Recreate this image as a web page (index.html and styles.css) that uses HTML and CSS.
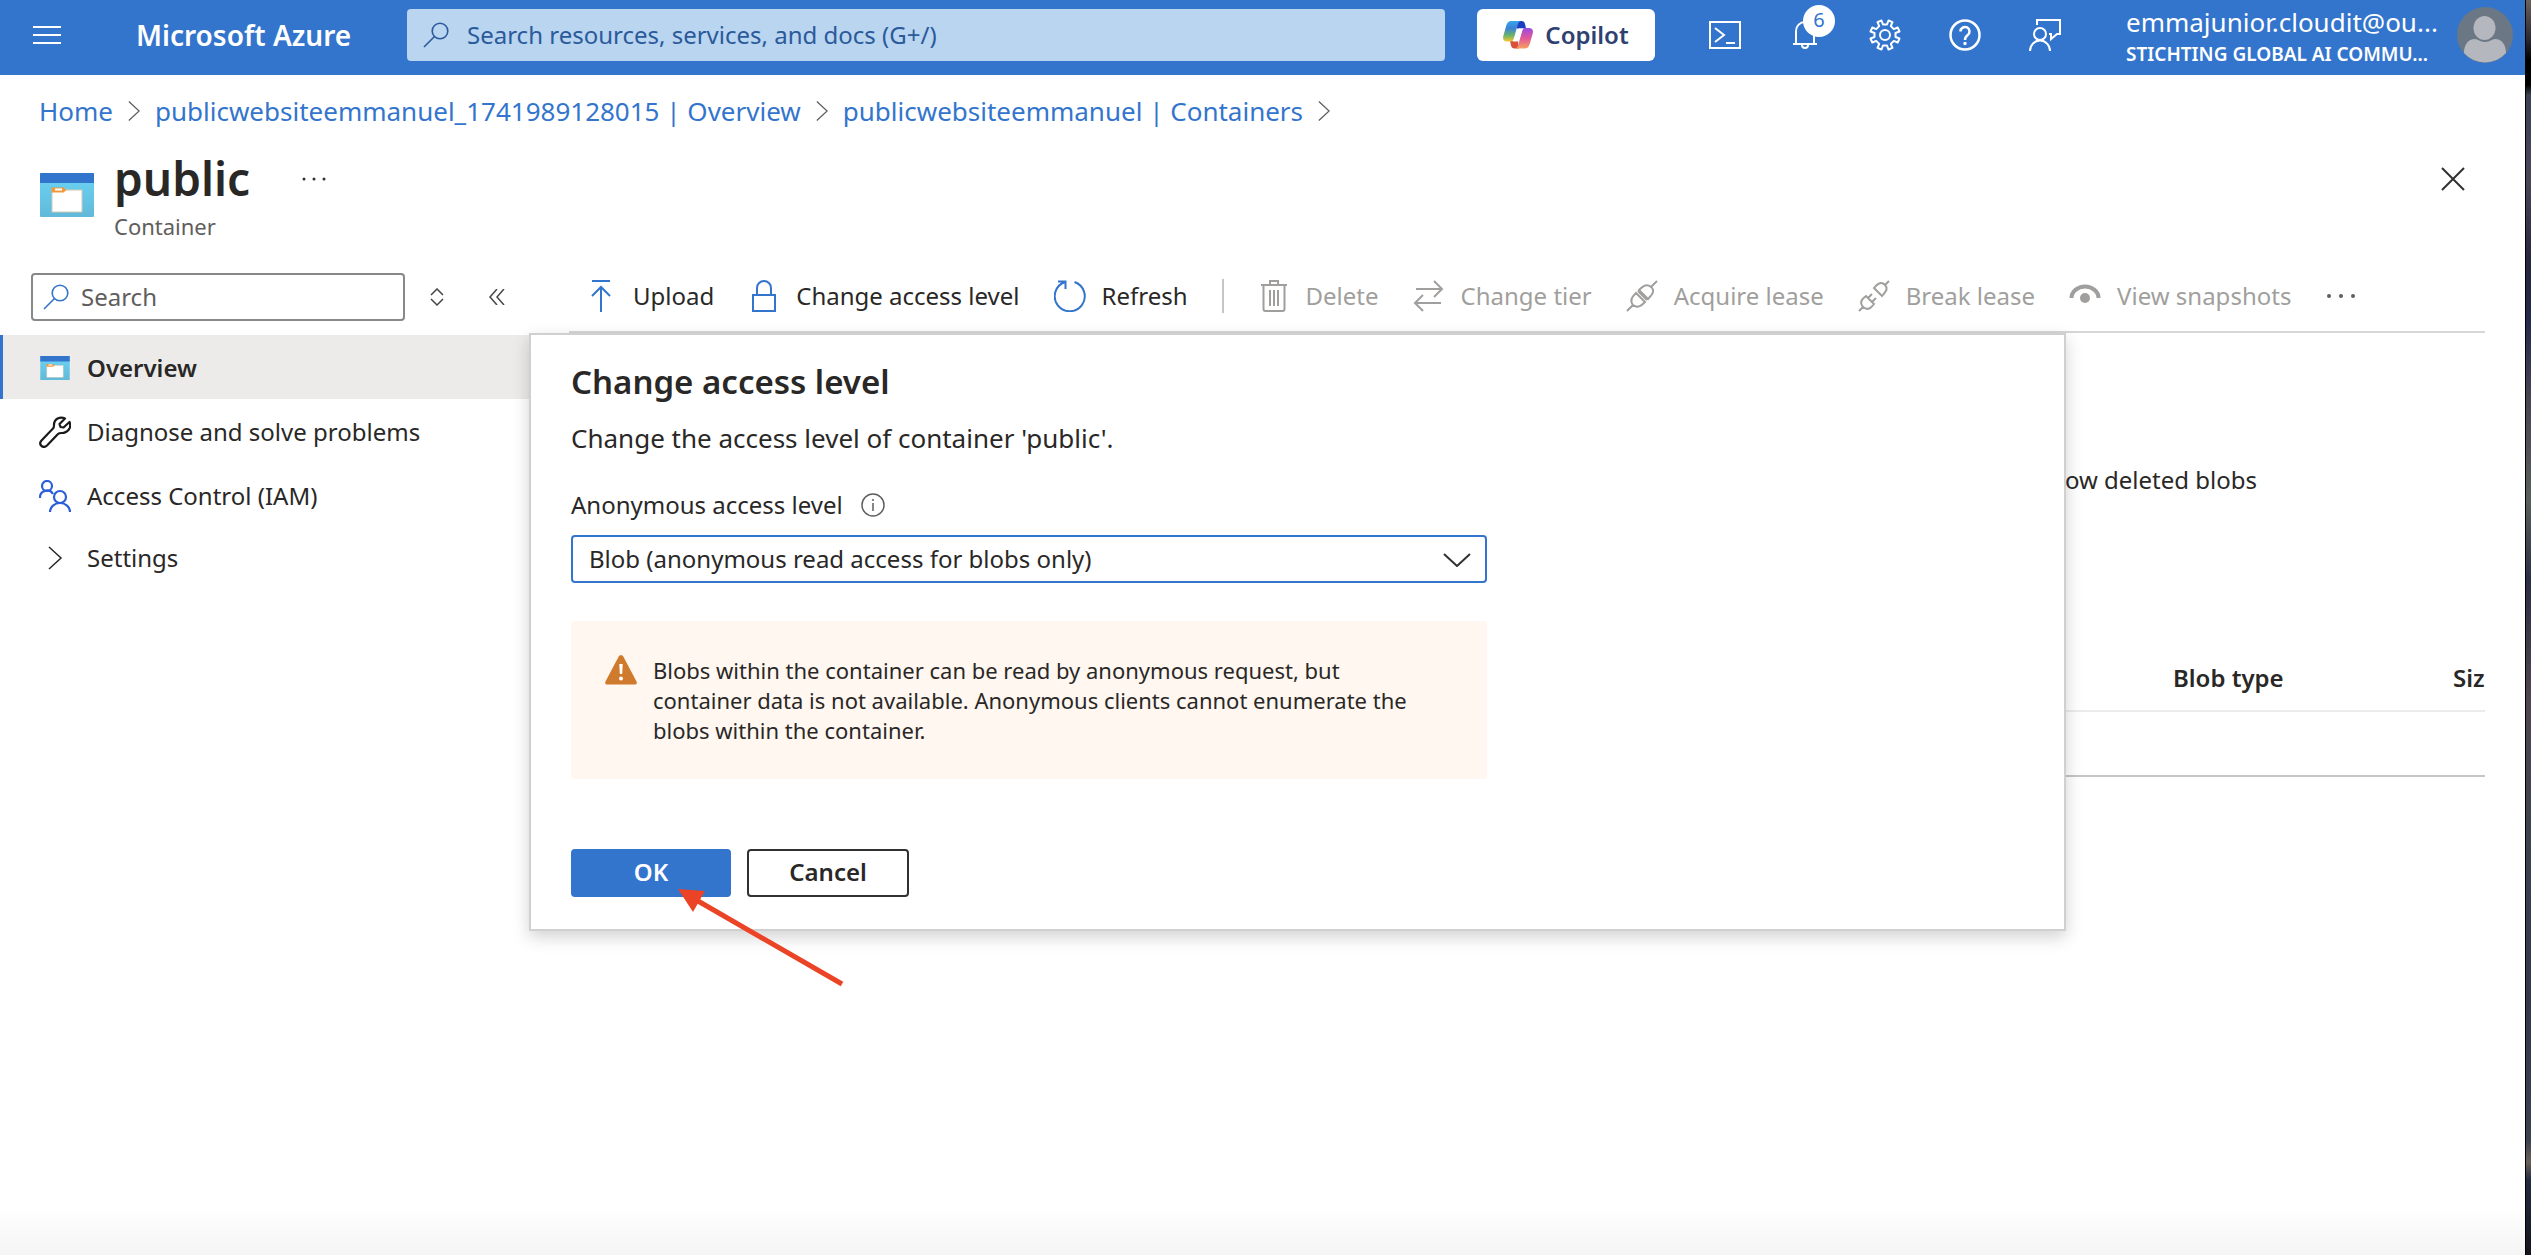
FILE: index.html
```html
<!DOCTYPE html>
<html lang="en">
<head>
    <meta charset="UTF-8">
    <meta name="viewport" content="width=device-width, initial-scale=1.0">
    <title>public - Microsoft Azure</title>
    <link rel="stylesheet" href="styles.css">
</head>
<body>

<!-- Shared icons -->
<svg class="icon-defs" aria-hidden="true">
    <defs>
        <linearGradient id="container-body" x1="0" y1="0" x2="0" y2="1">
            <stop offset="0" stop-color="#6ad4f5"/>
            <stop offset="1" stop-color="#62b9d9"/>
        </linearGradient>
        <linearGradient id="copilot-left" x1="0" y1="0" x2="0" y2="1">
            <stop offset="0" stop-color="#3aa5e8"/>
            <stop offset="0.35" stop-color="#3b82d8"/>
            <stop offset="0.7" stop-color="#6bb36a"/>
            <stop offset="1" stop-color="#f5c62e"/>
        </linearGradient>
        <linearGradient id="copilot-right" x1="0" y1="0" x2="0" y2="1">
            <stop offset="0" stop-color="#9a4be0"/>
            <stop offset="0.5" stop-color="#e2589a"/>
            <stop offset="1" stop-color="#f6a05c"/>
        </linearGradient>
    </defs>
    <symbol id="icon-container" viewBox="0 0 54 44">
        <rect width="54" height="44" rx="1" fill="url(#container-body)"/>
        <path d="M0 10V1q0-1 1-1h52q1 0 1 1v9z" fill="#3375cd"/>
        <rect x="12" y="17" width="30" height="22" fill="#fff" stroke="#cfc9b8"/>
        <path d="M11.500 14.500h12l3 2.500-3 2.500h-12z" fill="#ef9a3d"/>
        <rect x="15" y="15.500" width="7" height="2" fill="#fff"/>
    </symbol>
    <symbol id="icon-search" viewBox="0 0 26 26">
        <g fill="none" stroke="currentColor" stroke-width="1.600">
            <circle cx="17" cy="9" r="7.800"/>
            <path d="M11.500 14.500L1 25"/>
        </g>
    </symbol>
    <symbol id="icon-chevron" viewBox="0 0 14 24">
        <path d="M1 1l12 11L1 23" fill="none" stroke="currentColor" stroke-width="1.500"/>
    </symbol>
</svg>

<div class="portal">
    <header class="topbar">
        <button class="icon-btn menu-btn" aria-label="Show portal menu">
            <svg width="28" height="20" viewBox="0 0 28 20"><path d="M0 2h28M0 10h28M0 18h28" stroke="#fff" stroke-width="2"/></svg>
        </button>
        <a class="brand" href="#">Microsoft Azure</a>
        <div class="global-search">
            <svg width="26" height="26"><use href="#icon-search"/></svg>
            <input type="text" aria-label="Search resources, services, and docs" placeholder="Search resources, services, and docs (G+/)">
        </div>
        <button class="copilot-btn">
            <svg width="30" height="28" viewBox="0 0 30 28">
                <path d="M14 0h4.500c2 0 3 1 3.500 3l1 4.500h-9z" fill="#1b3fc0"/>
                <path d="M16 27.500h-4.500c-2 0-3-1-3.500-3L7 20h8z" fill="#d8503c"/>
                <path d="M8.500 0H18c-1.800 0-2.800 2-3.300 4l-3.600 12.500c-.7 2.600-1.600 4-3.600 4H4c-3 0-4.600-2-3.700-5.500l3-10.500C4.300 1.500 5.500 0 8.500 0z" fill="url(#copilot-left)"/>
                <path d="M21.500 27.500H12c1.800 0 2.800-2 3.300-4L18.900 11c.7-2.600 1.600-4 3.600-4H26c3 0 4.600 2 3.700 5.500l-3 10.500c-1 3-2.200 4.500-5.200 4.500z" fill="url(#copilot-right)"/>
                <path d="M16 7.500h4.500q-1.200.6-1.800 3l-2 7q-.8 2.500-2.500 3H9.500q1.600-.8 2.200-3l2-7q.7-2.400 2.300-3z" fill="#fff"/>
            </svg>
            Copilot
        </button>
        <nav class="top-icons" aria-label="Portal tools">
            <button class="icon-btn" aria-label="Cloud Shell">
                <svg width="32" height="32" viewBox="0 0 32 32" fill="none" stroke="#fff" stroke-width="2"><rect x="1" y="3" width="30" height="26"/><path d="M6 9l9 7-9 7M17 24h9"/></svg>
            </button>
            <button class="icon-btn" aria-label="Notifications">
                <svg width="32" height="32" viewBox="0 0 32 32" fill="none" stroke="#fff" stroke-width="2"><path d="M4 25h24M7 25V12a9 9 0 0 1 18 0v13M13 26a3 3 0 0 0 6 0"/></svg>
                <span class="badge">6</span>
            </button>
            <button class="icon-btn" aria-label="Settings">
                <svg width="32" height="32" viewBox="0 0 32 32" fill="none" stroke="#fff" stroke-width="2" stroke-linejoin="round"><circle cx="16" cy="16" r="5"/><path d="M12.500 1.500L14 5.500h4l1.500-4 4 1.700-1.700 3.900 3 3 3.900-1.600 1.800 4-4 1.500v4l4 1.500-1.800 4-3.900-1.600-3 3 1.700 3.900-4 1.700-1.500-4h-4l-1.500 4-4-1.700 1.700-3.900-3-3-3.900 1.600-1.800-4 4-1.500v-4l-4-1.500 1.800-4 3.900 1.600 3-3-1.700-3.900z"/></svg>
            </button>
            <button class="icon-btn" aria-label="Help">
                <svg width="32" height="32" viewBox="0 0 32 32" fill="none" stroke="#fff" stroke-width="2.500"><circle cx="16" cy="16" r="14.500"/><path d="M11.500 12.500a4.500 4.500 0 1 1 7 3.700c-1.800 1.300-2.500 2-2.500 4.800"/><circle cx="16" cy="24.500" r="1" fill="#fff" stroke-width="1.500"/></svg>
            </button>
            <button class="icon-btn" aria-label="Feedback">
                <svg width="32" height="32" viewBox="0 0 32 32" fill="none" stroke="#fff" stroke-width="2"><circle cx="11" cy="15" r="6"/><path d="M1 32a10 10.500 0 0 1 20 0M8 6V1h23v14h-3l-6 5v-5h-2"/></svg>
            </button>
        </nav>
        <div class="account">
            <div class="account-text">
                <div class="account-mail">emmajunior.cloudit@ou...</div>
                <div class="account-org">STICHTING GLOBAL AI COMMU...</div>
            </div>
            <svg class="avatar" width="56" height="56" viewBox="0 0 56 56"><circle cx="28" cy="28" r="28" fill="#6b7785"/><path d="M7 46c0-8 4-14 11-14 3 0 5 3 10 3s7-3 10-3c7 0 11 6 11 14a28 28 0 0 1-42 0z" fill="#b4b7bd"/><ellipse cx="27.500" cy="21" rx="11" ry="12" fill="#b4b7bd"/></svg>
        </div>
    </header>

    <nav class="breadcrumb" aria-label="Breadcrumb">
        <a href="#">Home</a>
        <svg width="12" height="22"><use href="#icon-chevron"/></svg>
        <a href="#">publicwebsiteemmanuel_1741989128015 | Overview</a>
        <svg width="12" height="22"><use href="#icon-chevron"/></svg>
        <a href="#">publicwebsiteemmanuel | Containers</a>
        <svg width="12" height="22"><use href="#icon-chevron"/></svg>
    </nav>

    <div class="blade-header">
        <svg class="blade-icon" width="54" height="44"><use href="#icon-container"/></svg>
        <div class="blade-title">
            <h1>public</h1>
            <p>Container</p>
        </div>
        <button class="icon-btn blade-more" aria-label="More">
            <svg width="24" height="4" viewBox="0 0 24 4" fill="#323130"><circle cx="2" cy="2" r="1.500"/><circle cx="12" cy="2" r="1.500"/><circle cx="22" cy="2" r="1.500"/></svg>
        </button>
        <button class="icon-btn blade-close" aria-label="Close">
            <svg width="24" height="24" viewBox="0 0 24 24"><path d="M1 1l22 22M23 1L1 23" stroke="#323130" stroke-width="2"/></svg>
        </button>
    </div>

    <div class="blade-body">
        <aside class="sidebar">
            <div class="menu-search-row">
                <div class="menu-search">
                    <svg width="26" height="26"><use href="#icon-search"/></svg>
                    <input type="text" aria-label="Search menu" placeholder="Search">
                </div>
                <button class="icon-btn" aria-label="Expand all">
                    <svg width="14" height="18" viewBox="0 0 14 18" fill="none" stroke="#484644" stroke-width="1.500"><path d="M1 7l6-6 6 6M1 11l6 6 6-6"/></svg>
                </button>
                <button class="icon-btn" aria-label="Collapse menu">
                    <svg width="16" height="16" viewBox="0 0 16 16" fill="none" stroke="#484644" stroke-width="1.500"><path d="M8 0L1 8l7 8M15 0L8 8l7 8"/></svg>
                </button>
            </div>
            <ul class="menu">
                <li>
                    <a class="menu-item active" href="#">
                        <svg width="32" height="24"><use href="#icon-container"/></svg>
                        Overview
                    </a>
                </li>
                <li>
                    <a class="menu-item" href="#">
                        <svg width="32" height="32" viewBox="0 0 32 32" fill="none" stroke="#1b1a19" stroke-width="2.200" stroke-linejoin="round"><path d="M26 2.500c-5-2.500-11 .5-11 6.500 0 1.500 0 2.500-1 3.500L2.500 24.500c-3.500 4 1.500 8.500 5.500 5L19 18c1-1 2-1 3.500-1 6 0 10.500-5 8-11l-6 5.500-3-.5-1-3z"/></svg>
                        Diagnose and solve problems
                    </a>
                </li>
                <li>
                    <a class="menu-item" href="#">
                        <svg width="32" height="32" viewBox="0 0 32 32" fill="none" stroke="#2b5fd9" stroke-width="2.200"><circle cx="8" cy="6" r="5"/><path d="M1 18a7 7 0 0 1 13-4"/><circle cx="21" cy="17" r="6"/><path d="M11 32a10 9 0 0 1 20 0"/></svg>
                        Access Control (IAM)
                    </a>
                </li>
                <li>
                    <a class="menu-item menu-group" href="#">
                        <svg width="32" height="24"><use href="#icon-chevron"/></svg>
                        Settings
                    </a>
                </li>
            </ul>
        </aside>

        <main class="content">
            <div class="toolbar">
                <button class="tool">
                    <svg width="32" height="32" viewBox="0 0 32 32" fill="none" stroke="#3375cd" stroke-width="2"><path d="M7 1h18M16 32V7M7 16l9-9 9 9"/></svg>
                    Upload
                </button>
                <button class="tool">
                    <svg width="32" height="32" viewBox="0 0 32 32" fill="none" stroke="#3375cd" stroke-width="2"><path d="M5 15h22v16H5zM9 15V8a7 7 0 0 1 14 0v7"/></svg>
                    Change access level
                </button>
                <button class="tool">
                    <svg width="32" height="32" viewBox="0 0 32 32" fill="none" stroke="#3375cd" stroke-width="2"><path d="M20.500 2a15 15 0 1 1-9.500 0M4 1.500h7.500V9"/></svg>
                    Refresh
                </button>
                <span class="divider"></span>
                <button class="tool" disabled>
                    <svg width="32" height="32" viewBox="0 0 32 32" fill="none" stroke="#a19f9d" stroke-width="2"><path d="M3 5h26M12 5V1h8v4M5.500 5v24q0 2 2 2h17q2 0 2-2V5M12 10v16M16 10v16M20 10v16"/></svg>
                    Delete
                </button>
                <button class="tool" disabled>
                    <svg width="32" height="32" viewBox="0 0 32 32" fill="none" stroke="#a19f9d" stroke-width="2"><path d="M3 9h26M21 1l8 8-8 8M28 23H2M10 15l-8 8 8 8"/></svg>
                    Change tier
                </button>
                <button class="tool" disabled>
                    <svg width="32" height="32" viewBox="0 0 32 32" fill="none" stroke="#a19f9d" stroke-width="2"><path d="M1 31l6-6M25 7l6-6M7 25c-4-5 0-9 3-12l9 9c-3 3-7 7-12 3zM12 11l9 9M13 10c3-3 7-7 12-3s0 9-3 12z"/></svg>
                    Acquire lease
                </button>
                <button class="tool" disabled>
                    <svg width="32" height="32" viewBox="0 0 32 32" fill="none" stroke="#a19f9d" stroke-width="2"><path d="M1 31l4-4M27 5l4-4M5 27c-4-5-1-8 3-11l8 8c-3 4-6 7-11 3zM10 18l4-4M14 22l4-4M16 8l8 8c3-4 7-7 3-11s-8-1-11 3z"/></svg>
                    Break lease
                </button>
                <button class="tool" disabled>
                    <svg width="32" height="32" viewBox="0 0 32 32"><path d="M2.500 18a13.500 11.500 0 0 1 27 0" fill="none" stroke="#a19f9d" stroke-width="4"/><circle cx="16" cy="18" r="5" fill="#a19f9d"/></svg>
                    View snapshots
                </button>
                <button class="tool tool-more" aria-label="More commands">
                    <svg width="32" height="4" viewBox="0 0 32 4" fill="#605e5c"><circle cx="4" cy="2" r="2"/><circle cx="16" cy="2" r="2"/><circle cx="28" cy="2" r="2"/></svg>
                </button>
            </div>

            <div class="filter-row">Show deleted blobs</div>

            <div class="table-wrap">
                <table class="blob-table">
                    <thead>
                        <tr>
                            <th class="col-name">Name</th>
                            <th class="col-type">Blob type</th>
                            <th class="col-size">Size</th>
                        </tr>
                    </thead>
                    <tbody>
                        <tr><td colspan="3"></td></tr>
                    </tbody>
                </table>
            </div>

            <!-- Change access level dialog -->
            <section class="dialog" role="dialog" aria-labelledby="dialog-title">
                <h2 id="dialog-title">Change access level</h2>
                <p class="dialog-text">Change the access level of container 'public'.</p>
                <div class="field-label">
                    <label for="access-level">Anonymous access level</label>
                    <svg width="24" height="24" viewBox="0 0 24 24" fill="none" stroke="#605e5c" stroke-width="1.500"><circle cx="12" cy="12" r="11"/><path d="M12 10v8M12 6v2"/></svg>
                </div>
                <div class="select-wrap">
                    <select id="access-level">
                        <option>Blob (anonymous read access for blobs only)</option>
                    </select>
                    <svg class="select-arrow" width="28" height="14" viewBox="0 0 28 14"><path d="M1 1l13 12L27 1" fill="none" stroke="#323130" stroke-width="2"/></svg>
                </div>
                <div class="warning">
                    <svg width="32" height="30" viewBox="0 0 32 30"><path d="M16 0q1.500 0 2.300 1.500l13.200 25Q32.500 29.500 30 29.500H2Q-.5 29.500.5 26.500l13.200-25Q14.500 0 16 0z" fill="#cf7a2c"/><path d="M14.300 9h3.400l-.5 10h-2.400z" fill="#fff"/><circle cx="16" cy="23.500" r="2" fill="#fff"/></svg>
                    <p>Blobs within the container can be read by anonymous request, but container data is not available. Anonymous clients cannot enumerate the blobs within the container.</p>
                </div>
                <div class="dialog-actions">
                    <button class="btn btn-primary">OK</button>
                    <button class="btn">Cancel</button>
                    <svg class="pointer-arrow" width="166" height="98" viewBox="0 0 166 98"><path d="M20 12L164 95" stroke="#eb4325" stroke-width="5"/><path d="M0 0l27 2-12 21z" fill="#eb4325"/></svg>
                </div>
            </section>
        </main>
    </div>
</div>
<div class="desktop-edge"></div>

</body>
</html>
```
FILE: styles.css
```css
* {
    box-sizing: border-box;
}
body {
    font-family: "Segoe UI", "Noto Sans", "Open Sans", sans-serif;
    font-size: 24px;
    line-height: 32px;
    color: #292827;
    margin: 0;
    min-height: 100vh;
    display: flex;
}
h1, h2, p, ul {
    margin: 0;
    padding: 0;
}
a {
    text-decoration: none;
}
button, input, select {
    font: inherit;
    color: inherit;
}
svg {
    flex-shrink: 0;
}
.icon-defs {
    position: absolute;
    width: 0;
    height: 0;
}
.portal {
    flex: 1;
    min-width: 0;
    background: linear-gradient(to top, #f5f5f5, #fff 50px);
}
/* Desktop showing beside the browser window */
.desktop-edge {
    width: 6px;
    border-left: 1px solid #000;
    background: linear-gradient(#6a625e 0, #2a2730 40px, #000 60px, #000 85px, #3a4254 95px, #4a4658 180px, #26263c 260px, #232a4c 320px, #4a4454 400px, #58605c 500px, #2c2e44 580px, #504650 700px, #3a4250 850px, #34384a 1000px, #3a4250 1140px, #6a6058 1162px, #222c3e 1180px, #14141f 100%);
}
.icon-btn {
    position: relative;
    display: flex;
    padding: 0;
    border: none;
    background: none;
    cursor: pointer;
}

/* Top bar */
.topbar {
    display: flex;
    align-items: center;
    height: 75px;
    padding: 0 12px 5px 33px;
    background-color: #3375cd;
    color: #fff;
}
.brand {
    width: 271px;
    margin-left: 75px;
    font-size: 28px;
    font-weight: 600;
    color: #fff;
}
.global-search {
    flex: 1;
    display: flex;
    align-items: center;
    gap: 18px;
    height: 52px;
    padding: 0 16px;
    border-radius: 4px;
    background-color: #b9d5f0;
    color: #2b5a9b;
}
.global-search input, .menu-search input {
    flex: 1;
    min-width: 0;
    padding: 0;
    border: none;
    outline: none;
    background: none;
}
.global-search input::placeholder {
    color: #2b5a9b;
}
.copilot-btn {
    display: flex;
    align-items: center;
    justify-content: center;
    gap: 12px;
    width: 178px;
    height: 52px;
    margin-left: 32px;
    border: none;
    border-radius: 6px;
    background-color: #fff;
    color: #2f4170;
    font-weight: 600;
}
.top-icons {
    display: flex;
    gap: 48px;
    margin-left: 54px;
}
.badge {
    position: absolute;
    top: -14px;
    left: 14px;
    width: 32px;
    height: 32px;
    border-radius: 50%;
    background-color: #fff;
    color: #3375cd;
    font-size: 20px;
    line-height: 30px;
}
.account {
    display: flex;
    align-items: center;
    gap: 10px;
    margin-left: 65px;
}
.account-text {
    width: 321px;
    padding-top: 5px;
    white-space: nowrap;
}
.account-mail {
    font-size: 26px;
}
.account-org {
    font-size: 19px;
    font-weight: 600;
}

/* Breadcrumb */
.breadcrumb {
    display: flex;
    align-items: center;
    gap: 15px;
    padding: 18px 39px 0;
    font-size: 26px;
    line-height: 36px;
    color: #605e5c;
}
.breadcrumb a {
    color: #3375cd;
}

/* Blade header */
.blade-header {
    display: flex;
    padding: 17px 60px 15px 40px;
}
.blade-icon {
    margin-top: 27px;
}
.blade-title {
    margin-left: 20px;
}
.blade-title h1 {
    font-size: 46px;
    font-weight: 600;
    line-height: 64px;
}
.blade-title p {
    color: #605e5c;
    font-size: 22px;
}
.blade-more {
    align-self: flex-start;
    margin: 31px 0 0 52px;
}
.blade-close {
    align-self: flex-start;
    margin: 21px 0 0 auto;
}
.blade-body {
    display: flex;
}

/* Resource menu */
.sidebar {
    width: 529px;
    padding-top: 16px;
}
.menu-search-row {
    display: flex;
    align-items: center;
    margin-bottom: 14px;
    padding: 0 24px 0 31px;
}
.menu-search {
    display: flex;
    align-items: center;
    gap: 12px;
    width: 374px;
    height: 48px;
    margin-right: 25px;
    padding: 0 10px;
    border: 2px solid #8a8886;
    border-radius: 4px;
    color: #3375cd;
}
.menu-search input::placeholder {
    color: #605e5c;
}
.menu-search-row .icon-btn + .icon-btn {
    margin-left: 45px;
}
.menu {
    list-style: none;
}
.menu-item {
    display: flex;
    align-items: center;
    gap: 16px;
    height: 64px;
    padding: 2px 0 0 36px;
    border-left: 3px solid transparent;
    color: #292827;
}
.menu-item.active {
    border-color: #3375cd;
    background-color: #edebe9;
    font-weight: 600;
}
.menu-group {
    height: 60px;
}

/* Content */
.content {
    position: relative;
    flex: 1;
    min-width: 0;
}
.toolbar {
    display: flex;
    align-items: center;
    gap: 34px;
    height: 76px;
    margin: 0 40px;
    padding: 4px 16px 0;
    border-bottom: 2px solid #d6d6d6;
}
.tool {
    display: flex;
    align-items: center;
    gap: 16px;
    padding: 0;
    border: none;
    background: none;
    white-space: nowrap;
}
.tool:disabled {
    color: #a19f9d;
}
.divider {
    width: 2px;
    height: 34px;
    background-color: #c8c6c4;
}
.filter-row {
    display: flex;
    justify-content: flex-end;
    margin-top: 131px;
    padding-right: 268px;
}
.table-wrap {
    margin: 149px 40px 0;
    overflow: hidden;
}
.blob-table {
    width: calc(100% + 280px);
    table-layout: fixed;
    border-collapse: collapse;
}
.blob-table th {
    height: 66px;
    padding: 0;
    border-bottom: 2px solid #edebe9;
    text-align: left;
    font-weight: 600;
}
.blob-table td {
    height: 65px;
    padding: 0;
    border-bottom: 2px solid #c8c6c4;
}
.col-type {
    width: 280px;
}
.col-size {
    width: 312px;
}

/* Dialog */
.dialog {
    position: absolute;
    top: 76px;
    left: 0;
    width: 77%;
    padding: 23px 40px 32px;
    border: 2px solid #d2d0ce;
    background-color: #fff;
    box-shadow: 0 6px 16px rgba(0, 0, 0, 0.18);
}
.dialog h2 {
    font-size: 33px;
    font-weight: 600;
    line-height: 48px;
}
.dialog-text {
    margin-top: 14px;
    font-size: 26px;
    line-height: 36px;
}
.field-label {
    display: flex;
    align-items: center;
    gap: 18px;
    margin: 33px 0 14px;
}
.select-wrap {
    position: relative;
    max-width: 916px;
}
.select-wrap select {
    width: 100%;
    height: 48px;
    padding: 0 16px;
    border: 2px solid #3375cd;
    border-radius: 4px;
    background-color: #fff;
    appearance: none;
}
.select-arrow {
    position: absolute;
    top: 18px;
    right: 16px;
    pointer-events: none;
}
.warning {
    display: flex;
    gap: 16px;
    max-width: 916px;
    margin-top: 38px;
    padding: 34px 56px 34px 34px;
    border-radius: 4px;
    background-color: #fff7f0;
    font-size: 22px;
    line-height: 30px;
}
.dialog-actions {
    position: relative;
    display: flex;
    gap: 16px;
    margin-top: 70px;
}
.btn {
    width: 162px;
    height: 48px;
    padding: 0 0 2px;
    border: 2px solid #323130;
    border-radius: 4px;
    background-color: #fff;
    font-weight: 600;
    cursor: pointer;
}
.btn-primary {
    width: 160px;
    border-color: #3375cd;
    background-color: #3375cd;
    color: #fff;
}
.pointer-arrow {
    position: absolute;
    top: 40px;
    left: 107px;
}
```
